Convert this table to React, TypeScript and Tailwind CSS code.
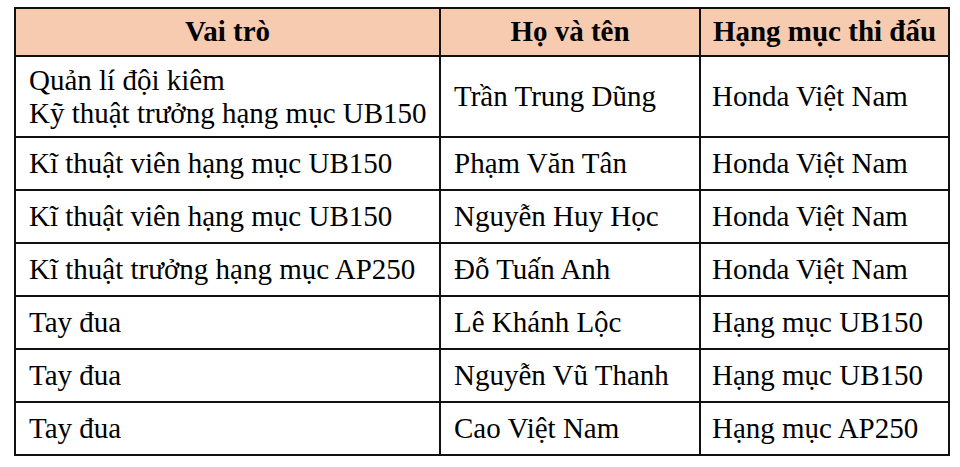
const rows: [string[], string, string][] = [
  [["Quản lí đội kiêm", "Kỹ thuật trưởng hạng mục UB150"], "Trần Trung Dũng", "Honda Việt Nam"],
  [["Kĩ thuật viên hạng mục UB150"], "Phạm Văn Tân", "Honda Việt Nam"],
  [["Kĩ thuật viên hạng mục UB150"], "Nguyễn Huy Học", "Honda Việt Nam"],
  [["Kĩ thuật trưởng hạng mục AP250"], "Đỗ Tuấn Anh", "Honda Việt Nam"],
  [["Tay đua"], "Lê Khánh Lộc", "Hạng mục UB150"],
  [["Tay đua"], "Nguyễn Vũ Thanh", "Hạng mục UB150"],
  [["Tay đua"], "Cao Việt Nam", "Hạng mục AP250"],
];

export default function App() {
  return (
    <div className="w-[960px] h-[467px] bg-white pl-[14px] pt-[7px] text-black font-['Liberation_Serif']">
      <table className="font-['Liberation_Serif'] border-collapse border-[2px] border-[#111] table-fixed w-[934px] text-[29px] leading-[33px]">
        <colgroup>
          <col className="w-[425px]" />
          <col className="w-[260px]" />
          <col className="w-[249px]" />
        </colgroup>
        <thead>
          <tr className="bg-[#f7cbb0] h-[48px]">
            <th className="border-[2px] border-[#111] font-bold text-center pb-[2px]">Vai trò</th>
            <th className="border-[2px] border-[#111] font-bold text-center pb-[2px]">Họ và tên</th>
            <th className="border-[2px] border-[#111] font-bold text-center pb-[2px]">Hạng mục thi đấu</th>
          </tr>
        </thead>
        <tbody>
          {rows.map(([role, name, cat], i) => (
            <tr key={i} className={i === 0 ? "h-[81px]" : "h-[53px]"}>
              <td className="border-[2px] border-[#111] pl-[13px] align-middle">
                {role.map((line) => (
                  <div key={line}>{line}</div>
                ))}
              </td>
              <td className="border-[2px] border-[#111] pl-[13px] align-middle">{name}</td>
              <td className="border-[2px] border-[#111] pl-[11px] align-middle">{cat}</td>
            </tr>
          ))}
        </tbody>
      </table>
    </div>
  );
}
